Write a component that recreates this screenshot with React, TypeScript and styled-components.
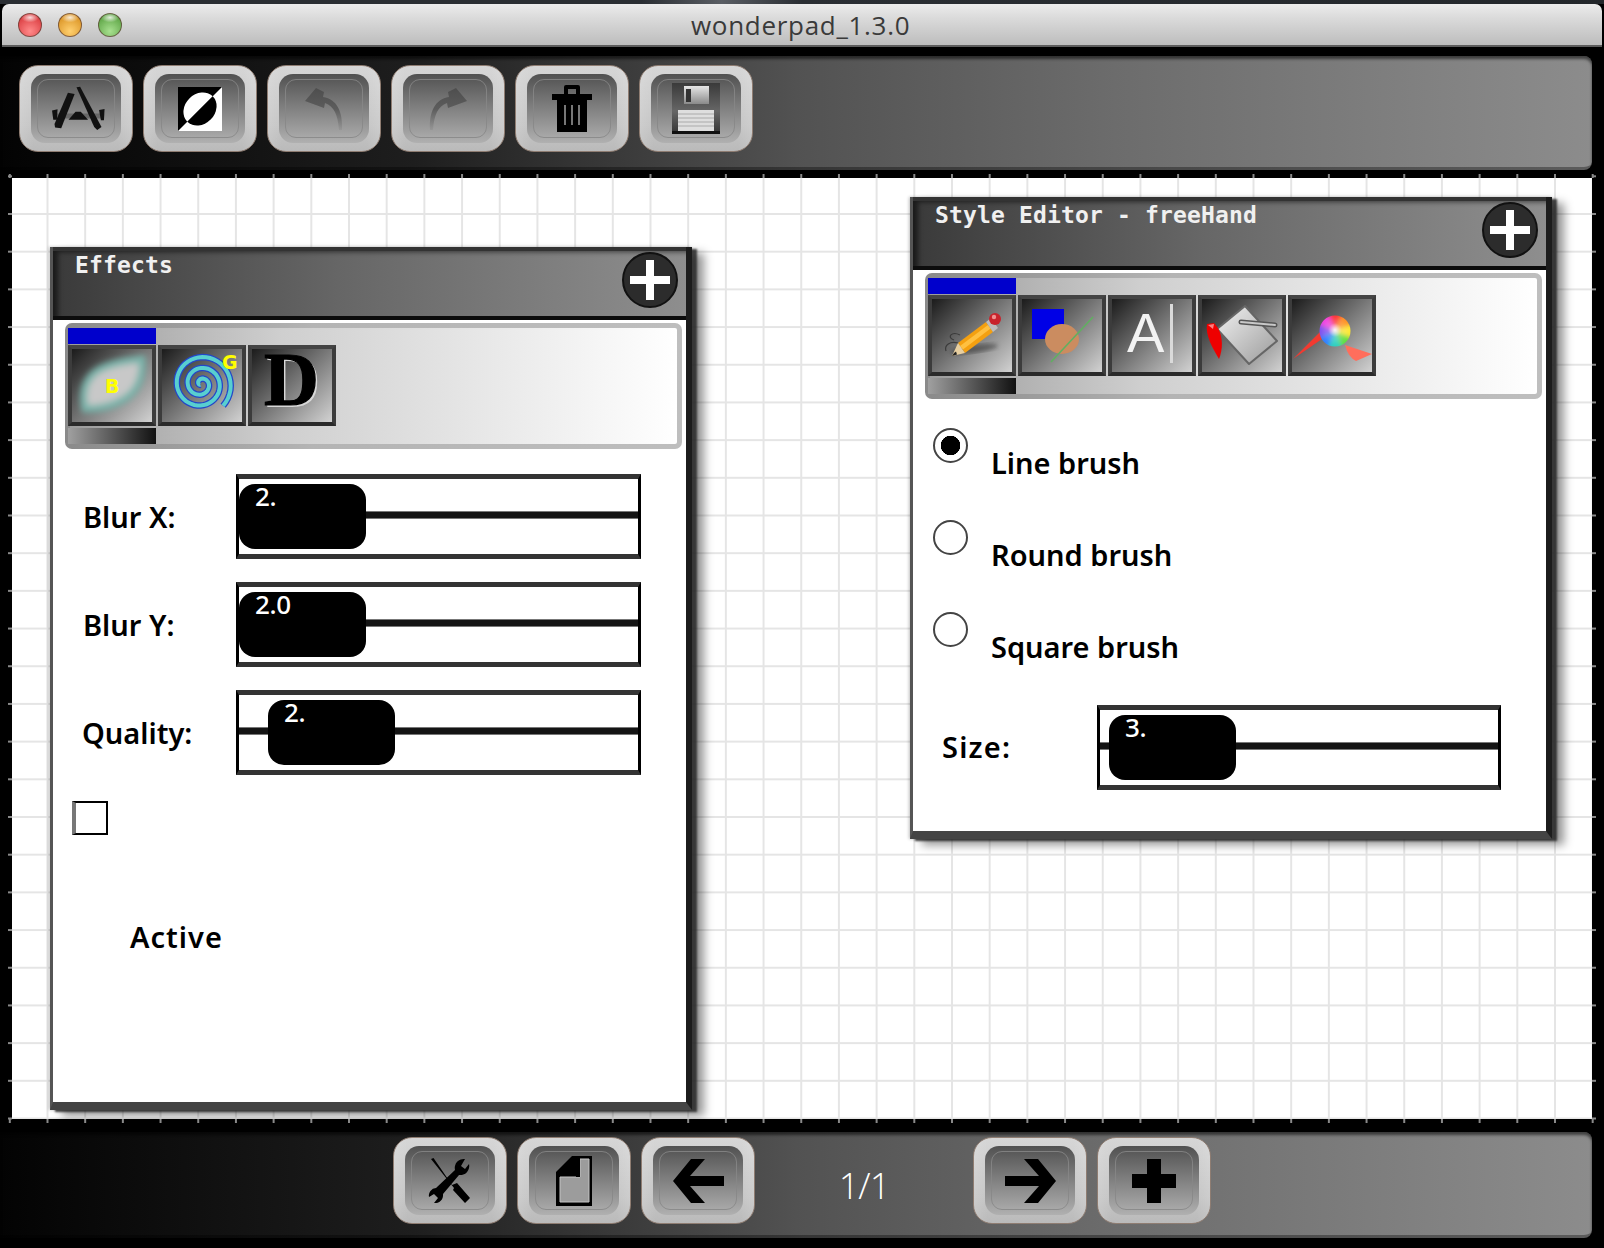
import React from "react";
import styled, { createGlobalStyle } from "styled-components";

const Global = createGlobalStyle`
  html, body { margin: 0; padding: 0; background: #000; }
  #root { width: 1604px; height: 1248px; overflow: hidden; }
`;

const Page = styled.div`
  width: 1604px;
  height: 1248px;
  background: #000;
  display: flex;
  flex-direction: column;
  overflow: hidden;
`;

const DesktopStrip = styled.div`
  height: 4px;
  flex: none;
  background: linear-gradient(to right, #2a2e33 0%, #2a2e33 40%, #5a5e64 45%, #2a2e33 50%, #23272b 100%);
`;

const TitleBar = styled.header`
  height: 43px;
  flex: none;
  margin: 0 2px;
  box-sizing: border-box;
  display: flex;
  align-items: center;
  position: relative;
  padding-left: 16px;
  gap: 16px;
  border-radius: 7px 7px 0 0;
  border-bottom: 2px solid #5c5c5c;
  background: linear-gradient(to bottom, #ececec 0%, #dadada 35%, #bdbdbd 100%);
`;

const Light = styled.span<{ $c: string; $d: string }>`
  width: 24px;
  height: 24px;
  border-radius: 50%;
  box-sizing: border-box;
  border: 1px solid rgba(90, 60, 50, 0.7);
  background:
    radial-gradient(ellipse 40% 22% at 50% 16%, rgba(255, 255, 255, 0.8), rgba(255, 255, 255, 0) 100%),
    radial-gradient(circle at 50% 78%, ${(p) => p.$c} 0%, ${(p) => p.$d} 85%);
`;

const WindowTitle = styled.div`
  position: absolute;
  left: 689px;
  top: 5px;
  font-family: "Open Sans", sans-serif;
  font-size: 26px;
  letter-spacing: 0.7px;
  line-height: 32px;
  color: #3a3a3a;
`;

const BarBase = styled.div`
  width: 1592px;
  flex: none;
  box-sizing: border-box;
  display: flex;
  border-radius: 0 8px 8px 0;
  border-bottom: 3px solid rgba(0, 0, 0, 0.35);
  box-shadow: inset 0 3px 3px rgba(0, 0, 0, 0.55);
  background: linear-gradient(to right, #030303 0%, #1e1e1e 26%, #525252 50%, #6c6c6c 70%, #8c8c8c 100%);
`;

const TopBar = styled(BarBase)`
  height: 114px;
  margin-top: 9px;
  padding: 9px 0 0 19px;
  gap: 10px;
`;

const BottomBar = styled(BarBase)`
  height: 106px;
  margin-top: 9px;
  padding: 5px 0 0 393px;
  gap: 10px;
`;

const PageLabel = styled.div`
  width: 198px;
  height: 87px;
  display: flex;
  align-items: center;
  justify-content: center;
  font-family: "Open Sans", sans-serif;
  font-weight: 300;
  font-size: 36px;
  letter-spacing: -1px;
  color: #fff;
  padding-top: 9px;
  box-sizing: border-box;
`;

const ToolButton = styled.button`
  width: 114px;
  height: 87px;
  box-sizing: border-box;
  padding: 8px 11px;
  border: 1px solid #8f7d72;
  border-radius: 19px;
  background:
    linear-gradient(to right, rgba(255, 255, 255, 0.12), rgba(255, 255, 255, 0) 12%, rgba(255, 255, 255, 0) 88%, rgba(255, 255, 255, 0.12)),
    linear-gradient(to bottom, #d6d6d6 0%, #c6c6c6 70%, #bababa 100%);
  flex: none;
  cursor: pointer;
`;

const ButtonWell = styled.div`
  width: 100%;
  height: 100%;
  box-sizing: border-box;
  padding: 5px 6px;
  border-radius: 14px;
  background: linear-gradient(to bottom, #515151 0%, #7c7c7c 45%, #b0b0b0 100%);
`;

const ButtonRim = styled.div`
  width: 100%;
  height: 100%;
  box-sizing: border-box;
  border: 1px solid rgba(135, 135, 135, 0.85);
  border-radius: 11px;
  display: flex;
  align-items: center;
  justify-content: center;
`;

const TickFrame = styled.div`
  width: 1588px;
  height: 949px;
  flex: none;
  margin: 4px 0 0 8px;
  box-sizing: border-box;
  padding: 4px;
  background-color: #000;
  background-image:
    linear-gradient(to right, #8a8a8a 2px, transparent 2px),
    linear-gradient(to right, #8a8a8a 2px, transparent 2px),
    linear-gradient(to bottom, #8a8a8a 2px, transparent 2px),
    linear-gradient(to bottom, #8a8a8a 2px, transparent 2px);
  background-size: 37.7px 4px, 37.7px 4px, 4px 37.7px, 4px 37.7px;
  background-repeat: repeat-x, repeat-x, repeat-y, repeat-y;
  background-position: 38.5px 0, 38.5px 100%, 0 39px, 100% 39px;
`;

const Stage = styled.main`
  position: relative;
  width: 100%;
  height: 100%;
  background-color: #fff;
  background-image:
    linear-gradient(to right, #e5e5e5 2px, transparent 2px),
    linear-gradient(to bottom, #e5e5e5 2px, transparent 2px);
  background-size: 37.7px 37.7px;
  background-position: 34.5px 35px;
  overflow: hidden;
`;

const Panel = styled.section<{ $x: number; $y: number; $h: number }>`
  position: absolute;
  left: ${(p) => p.$x}px;
  top: ${(p) => p.$y}px;
  width: 642px;
  height: ${(p) => p.$h}px;
  box-sizing: border-box;
  background: #fff;
  border-left: 3px solid #555;
  border-right: 6px solid #1c1c1c;
  border-bottom: 8px solid #444;
  box-shadow: 5px 2px 2px rgba(40, 40, 40, 0.85), 12px 6px 9px rgba(0, 0, 0, 0.42), -1px 0 3px rgba(0, 0, 0, 0.25);
  display: flex;
  flex-direction: column;
`;

const PanelHeader = styled.div`
  height: 73px;
  flex: none;
  box-sizing: border-box;
  display: flex;
  justify-content: space-between;
  align-items: flex-start;
  padding: 1px 8px 0 22px;
  border-top: 4px solid #333;
  border-bottom: 4px solid #0c0c0c;
  background: linear-gradient(to right, #3a3a3a 0%, #666 45%, #8e8e8e 100%);
  box-shadow: inset 7px 3px 5px -2px rgba(0, 0, 0, 0.55);
`;

const PanelTitle = styled.div`
  font-family: "DejaVu Sans Mono", monospace;
  font-size: 23px;
  letter-spacing: 0.15px;
  line-height: 27px;
  font-weight: 700;
  color: #f0f0f0;
  white-space: pre;
`;

const CloseButton = styled.button`
  width: 56px;
  height: 56px;
  padding: 0;
  border: 2px solid #111;
  border-radius: 50%;
  background: #2c2c2c;
  display: flex;
  align-items: center;
  justify-content: center;
  flex: none;
`;

const TabStrip = styled.div`
  width: 617px;
  height: 126px;
  flex: none;
  margin: 3px 0 0 12px;
  box-sizing: border-box;
  border: 5px solid transparent;
  border-radius: 7px;
  background:
    linear-gradient(to right, #9c9c9c 0%, #cfcfcf 35%, #ffffff 100%) padding-box,
    linear-gradient(to right, #8a8a8a 0%, #b4b4b4 40%, #bebebe 100%) border-box;
  display: flex;
  flex-direction: column;
`;

const TabRow = styled.div`
  display: flex;
  gap: 2px;
  margin-left: -2px;
  margin-top: 1px;
`;

const SelectedMark = styled.div`
  width: 88px;
  height: 16px;
  flex: none;
  margin-left: -2px;
  background: #0000cc;
`;

const LowerMark = styled.div`
  width: 88px;
  height: 16px;
  flex: none;
  margin: 2px 0 0 -2px;
  background: linear-gradient(to right, #a0a0a0, #111);
`;

const TabIcon = styled.div`
  width: 88px;
  height: 81px;
  flex: none;
  box-sizing: border-box;
  border: 4px solid #3c3c3c;
  border-top-color: #444;
  border-bottom-color: #2a2a2a;
  background: linear-gradient(135deg, #1b1b1b 0%, #808080 55%, #d2d2d2 100%);
  svg { display: block; }
`;

const SliderRow = styled.div<{ $pad: number; $col: number; $top: number }>`
  display: grid;
  grid-template-columns: ${(p) => p.$col}px 1fr;
  align-items: center;
  padding-left: ${(p) => p.$pad}px;
  margin-top: ${(p) => p.$top}px;
  height: 85px;
  flex: none;
`;

const FieldLabel = styled.label<{ $nudge?: number }>`
  font-family: "Noto Sans", sans-serif;
  font-weight: 600;
  font-size: 29px;
  line-height: 36px;
  color: #000;
  margin-left: ${(p) => p.$nudge ?? 0}px;
  margin-top: 1px;
`;

const SizeLabel = styled(FieldLabel)`
  letter-spacing: 1.2px;
  margin-top: -2px;
`;

const SliderBox = styled.div<{ $w: number }>`
  position: relative;
  width: ${(p) => p.$w}px;
  height: 85px;
  box-sizing: border-box;
  border: 3px solid #000;
  border-top: 5px solid #333;
  border-bottom: 5px solid #333;
  background: #fff;
`;

const SliderTrack = styled.div`
  position: absolute;
  left: 0;
  right: 0;
  top: 33px;
  height: 6px;
  background: #141414;
  box-shadow: 0 1px 0 #777, 0 -1px 0 #777;
`;

const SliderThumb = styled.div<{ $at: number }>`
  position: absolute;
  top: 5px;
  left: ${(p) => p.$at}px;
  width: 127px;
  height: 65px;
  box-sizing: border-box;
  padding-left: 16px;
  border-radius: 16px;
  background: #000;
  color: #fff;
  font-family: "Noto Sans", sans-serif;
  font-weight: 500;
  font-size: 26px;
  letter-spacing: -0.3px;
  line-height: 24px;
`;

const CheckBox = styled.div`
  width: 36px;
  height: 34px;
  box-sizing: border-box;
  margin: 26px 0 0 19px;
  border: 2px solid #000;
  border-left: 4px solid #777;
  flex: none;
`;

const CheckCaption = styled.div`
  font-family: "Noto Sans", sans-serif;
  font-weight: 600;
  font-size: 29px;
  letter-spacing: 1px;
  line-height: 36px;
  color: #000;
  margin: 84px 0 0 77px;
`;

const RadioList = styled.div`
  display: flex;
  flex-direction: column;
  margin-top: 29px;
  padding-left: 20px;
`;

const RadioRow = styled.div`
  height: 92px;
  display: flex;
  align-items: flex-start;
  gap: 23px;
`;

const RadioDot = styled.span<{ $on?: boolean }>`
  width: 35px;
  height: 35px;
  flex: none;
  box-sizing: border-box;
  border-radius: 50%;
  border: 2px solid #444;
  background: ${(p) => (p.$on ? "radial-gradient(circle, #000 0, #000 9.5px, #fff 10px)" : "#fff")};
`;

const RadioLabel = styled(FieldLabel)`
  margin-top: 17px;
`;

const Icon = styled.svg`
  display: block;
  flex: none;
`;

const AppIcon = () => (
  <Icon width="58" height="46" viewBox="110 78 190 150" style={{ marginLeft: 4 }}>
    <path d="M125 168 L288 168 L288 184 L125 184 Z" fill="#333" opacity="0.4" />
    <path d="M200 82 L212 80 L282 212 L268 222 L258 212 Z" fill="#111" />
    <path d="M172 100 L194 104 L150 216 L130 214 L128 202 Z" fill="#111" />
    <path d="M197 162 L214 162 L238 188 L174 188 Z" fill="#111" />
    <path d="M120 158 L138 154 L136 188 L124 188 Z" fill="#111" />
    <path d="M274 156 L292 153 L290 190 L280 190 Z" fill="#111" />
  </Icon>
);

const ContrastIcon = () => (
  <Icon width="44" height="44" viewBox="0 0 44 44">
    <rect width="44" height="44" fill="#fff" />
    <path d="M0 0 H44 L0 44 Z" fill="#000" />
    <g transform="rotate(-45 22 22)">
      <path d="M4 22 A18 15 0 0 1 40 22 Z" fill="#fff" />
      <path d="M4 22 A18 15 0 0 0 40 22 Z" fill="#000" />
    </g>
  </Icon>
);

const UndoIcon = ({ flip, id }: { flip?: boolean; id: string }) => (
  <Icon width="38" height="42" viewBox="0 0 38 42" style={flip ? { transform: "scaleX(-1)" } : undefined}>
    <defs>
      <linearGradient id={id} x1="0" y1="0" x2="0" y2="1">
        <stop offset="0" stopColor="#4e4e4e" />
        <stop offset="0.5" stopColor="#5c5c5c" />
        <stop offset="1" stopColor="#777" stopOpacity="0.2" />
      </linearGradient>
    </defs>
    <path d="M11 0 L0 13 L19 20 L20 15 C29 18 33 27 34 42 L37 42 C38 24 32 11 18 9 L19 4 Z" fill={`url(#${id})`} />
  </Icon>
);

const TrashIcon = () => (
  <Icon width="40" height="47" viewBox="0 0 40 47">
    <path d="M12 9 V2 Q12 0 14 0 H26 Q28 0 28 2 V9 H24 V4 H16 V9 Z" fill="#000" />
    <rect x="0" y="9" width="40" height="6" fill="#000" />
    <rect x="5" y="15" width="30" height="32" fill="#000" />
    <rect x="12" y="20" width="2" height="20" fill="#777" />
    <rect x="19" y="20" width="2" height="20" fill="#777" />
    <rect x="26" y="20" width="2" height="20" fill="#777" />
  </Icon>
);

const FloppyIcon = () => (
  <Icon width="50" height="52" viewBox="0 0 50 52">
    <defs>
      <linearGradient id="floppyBody" x1="0" y1="0" x2="0" y2="1">
        <stop offset="0" stopColor="#3a3a3a" />
        <stop offset="0.55" stopColor="#666" />
        <stop offset="1" stopColor="#333" />
      </linearGradient>
      <linearGradient id="floppyShutter" x1="0" y1="0" x2="0" y2="1">
        <stop offset="0" stopColor="#e6e6e6" />
        <stop offset="1" stopColor="#8a8a8a" />
      </linearGradient>
    </defs>
    <rect x="1" y="0" width="48" height="51" fill="url(#floppyBody)" />
    <rect x="13" y="3" width="25" height="18" fill="url(#floppyShutter)" />
    <rect x="15" y="6" width="5" height="13" fill="#333" />
    <rect x="7" y="27" width="36" height="21" fill="#dedede" />
    <path d="M7 31 H43 M7 35 H43 M7 39 H43 M7 43 H43" stroke="#aaa" strokeWidth="1" />
    <rect x="1" y="48" width="48" height="3" fill="#111" />
  </Icon>
);

const ToolsIcon = () => (
  <Icon width="44" height="46" viewBox="0 0 44 46">
    <path d="M3 1 L5.5 0 L24 27 L29 25 L42 40 L37 45 L25 32 L26 30 Z" fill="#000" />
    <path d="M37 1 A9 9 0 0 0 27 12 L8 30 A7.5 7.5 0 0 0 1 39 L6 36 L10 40 L6 45 A8 8 0 0 0 15 36 L31 17 A9 9 0 0 0 41 6 L37 11 L33 8 Z" fill="#000" />
  </Icon>
);

const DocIcon = () => (
  <Icon width="36" height="50" viewBox="0 0 36 50">
    <path d="M16 0 H36 V50 H0 V16 Z" fill="#000" />
    <path d="M24 3 H33 V46 H4 V21 H24 Z" fill="#9c9c9c" stroke="#c4c4c4" strokeWidth="1" />
    <rect x="20" y="3" width="4" height="18" fill="#000" />
  </Icon>
);

const ArrowIcon = ({ right }: { right?: boolean }) => (
  <Icon width="51" height="44" viewBox="0 0 51 44" style={right ? { transform: "scaleX(-1)" } : undefined}>
    <path d="M18 0 H32 L17 17 H51 V27 H17 L32 44 H18 L0 22 Z" fill="#000" />
  </Icon>
);

const PlusIcon = () => (
  <Icon width="44" height="44" viewBox="0 0 44 44">
    <path d="M15 0 H29 V15 H44 V29 H29 V44 H15 V29 H0 V15 H15 Z" fill="#000" />
  </Icon>
);

const WhitePlus = () => (
  <Icon width="40" height="40" viewBox="0 0 40 40">
    <path d="M16 0 H24 V16 H40 V24 H24 V40 H16 V24 H0 V16 H16 Z" fill="#fff" />
  </Icon>
);

const tabText = { fontFamily: "'DejaVu Sans', sans-serif", fontWeight: 700 };

const BlurTab = () => (
  <svg width="80" height="73" viewBox="0 0 80 73">
    <defs>
      <filter id="soft" x="-20%" y="-20%" width="140%" height="140%">
        <feGaussianBlur stdDeviation="3" />
      </filter>
    </defs>
    <path d="M13 60 C9 42 14 28 28 20 C42 13 58 11 70 10 C71 25 67 40 54 49 C42 57 26 60 13 60 Z" fill="#c8c8c8" stroke="#78b4aa" strokeWidth="7" filter="url(#soft)" />
    <text x="33" y="44" fontSize="19" fill="#ffff00" style={tabText}>B</text>
  </svg>
);

const spiralPath = (() => {
  const pts: string[] = [];
  const total = Math.PI * 2 * 2.75;
  for (let i = 0; i <= 120; i++) {
    const t = (i / 120) * total;
    const r = 1 + (t / total) * 30;
    const a = t + 2.35;
    pts.push(`${(39 + r * Math.cos(a)).toFixed(1)},${(35 + r * Math.sin(a)).toFixed(1)}`);
  }
  return "M" + pts.join(" L");
})();

const SpiralTab = () => (
  <svg width="80" height="73" viewBox="0 0 80 73">
    <path d={spiralPath} fill="none" stroke="#2347c8" strokeWidth="6.5" />
    <path d={spiralPath} fill="none" stroke="#58cfd0" strokeWidth="4" />
    <text x="60" y="20" fontSize="19" fill="#ffff00" style={tabText}>G</text>
  </svg>
);

const DropTab = () => (
  <svg width="80" height="73" viewBox="0 0 80 73" style={{ fontFamily: "'Liberation Serif', serif", fontWeight: 700, overflow: "visible" }}>
    <text x="14" y="58" fontSize="76" fill="#d8d8d8">D</text>
    <text x="12" y="56" fontSize="76" fill="#000" stroke="#000" strokeWidth="1.2">D</text>
  </svg>
);

const PencilTab = () => (
  <svg width="80" height="73" viewBox="0 0 80 73">
    <defs>
      <filter id="pshadow"><feGaussianBlur stdDeviation="2" /></filter>
    </defs>
    <ellipse cx="42" cy="50" rx="24" ry="4" fill="#333" opacity="0.55" filter="url(#pshadow)" transform="rotate(-8 42 50)" />
    <path d="M28 36 C20 32 14 38 22 41 M14 52 C12 46 18 42 26 44" fill="none" stroke="#2a2a2a" strokeWidth="1.2" opacity="0.7" />
    <path d="M26 44 L54 23 L61 33 L33 54 Z" fill="#f4a010" />
    <path d="M28 47 L56 26 L58.5 29.5 L31 50.5 Z" fill="#ffc040" />
    <path d="M26 44 L33 54 L20 57 Z" fill="#e8cfa0" />
    <path d="M22 54 L24 52.5 L25 55.5 L20 57 Z" fill="#222" />
    <path d="M54 23 L59 19 L66 29 L61 33 Z" fill="#bdbdbd" />
    <circle cx="63" cy="20" r="6" fill="#c8232c" />
    <circle cx="62" cy="18" r="2.2" fill="#f09090" />
  </svg>
);

const ShapesTab = () => (
  <svg width="80" height="73" viewBox="0 0 80 73">
    <rect x="10" y="10" width="32" height="30" fill="#0000e6" />
    <ellipse cx="40" cy="40" rx="17" ry="15" fill="#cb8c60" />
    <path d="M29 63 L71 18" stroke="#60b060" strokeWidth="1.6" />
  </svg>
);

const TextTab = () => (
  <svg width="80" height="73" viewBox="0 0 80 73" style={{ fontFamily: "'Liberation Sans', sans-serif" }}>
    <text x="15" y="53" fontSize="56" fill="#f2f2f2">A</text>
    <rect x="58" y="5" width="3" height="59" fill="#dadada" />
  </svg>
);

const BucketTab = () => (
  <svg width="80" height="73" viewBox="0 0 80 73">
    <defs>
      <linearGradient id="bucket" x1="0" y1="0" x2="1" y2="1">
        <stop offset="0" stopColor="#f2f2f2" />
        <stop offset="1" stopColor="#9a9a9a" />
      </linearGradient>
    </defs>
    <path d="M43 7 L75 42 L47 65 L15 30 Z" fill="url(#bucket)" stroke="#666" strokeWidth="2" strokeLinejoin="round" />
    <path d="M39 23 L73 26" stroke="#555" strokeWidth="5" strokeLinecap="round" />
    <path d="M39 23 L73 26" stroke="#c8c8c8" strokeWidth="2" strokeLinecap="round" />
    <path d="M5 25 C3 36 11 50 17 60 C21 50 21 38 16 29 L12 24 Z" fill="#ee0000" />
    <path d="M6 26 L12 25 L11 30 Z" fill="#ff8080" />
  </svg>
);

const wheel = ["#ff3030", "#ff9020", "#ffe830", "#60e040", "#30d0c0", "#3080ff", "#8050f0", "#f040e0"];

const ColorTab = () => (
  <svg width="80" height="73" viewBox="0 0 80 73">
    <defs>
      <radialGradient id="ballLight">
        <stop offset="0" stopColor="#fff" stopOpacity="0.9" />
        <stop offset="0.45" stopColor="#fff" stopOpacity="0.2" />
        <stop offset="1" stopColor="#fff" stopOpacity="0" />
      </radialGradient>
      <clipPath id="ballClip"><circle cx="43" cy="32" r="15.5" /></clipPath>
      <filter id="ballBlur"><feGaussianBlur stdDeviation="2" /></filter>
    </defs>
    <path d="M1 60 L24 37 L28 33 L30 40 Z" fill="#f23a30" />
    <path d="M53 46 L80 55 L64 62 Q56 58 53 46 Z" fill="#ff6e5c" />
    <g clipPath="url(#ballClip)">
      <g filter="url(#ballBlur)">
        {wheel.map((c, i) => {
          const a0 = ((i * 45 - 112) * Math.PI) / 180;
          const a1 = ((i * 45 - 67) * Math.PI) / 180;
          const d = `M43 32 L${43 + 22 * Math.cos(a0)} ${32 + 22 * Math.sin(a0)} A22 22 0 0 1 ${43 + 22 * Math.cos(a1)} ${32 + 22 * Math.sin(a1)} Z`;
          return <path key={c} d={d} fill={c} />;
        })}
      </g>
      <circle cx="43" cy="31" r="15.5" fill="url(#ballLight)" />
    </g>
  </svg>
);

const Slider = ({ value, at, width }: { value: string; at: number; width: number }) => (
  <SliderBox $w={width}>
    <SliderTrack />
    <SliderThumb $at={at}>{value}</SliderThumb>
  </SliderBox>
);

const Tabs = ({ children }: { children: React.ReactNode }) => (
  <TabStrip>
    <SelectedMark />
    <TabRow>{children}</TabRow>
    <LowerMark />
  </TabStrip>
);

const Btn = ({ children, label }: { children: React.ReactNode; label: string }) => (
  <ToolButton aria-label={label}>
    <ButtonWell>
      <ButtonRim>{children}</ButtonRim>
    </ButtonWell>
  </ToolButton>
);

export default function App() {
  return (
    <Page>
      <Global />
      <DesktopStrip />
      <TitleBar>
        <Light $c="#ff8a8a" $d="#d8383c" />
        <Light $c="#ffd070" $d="#d89020" />
        <Light $c="#a8e090" $d="#58a040" />
        <WindowTitle>wonderpad_1.3.0</WindowTitle>
      </TitleBar>
      <TopBar>
        <Btn label="apps"><AppIcon /></Btn>
        <Btn label="contrast"><ContrastIcon /></Btn>
        <Btn label="undo"><UndoIcon id="undoFill" /></Btn>
        <Btn label="redo"><UndoIcon id="redoFill" flip /></Btn>
        <Btn label="delete"><TrashIcon /></Btn>
        <Btn label="save"><FloppyIcon /></Btn>
      </TopBar>
      <TickFrame>
        <Stage>
          <Panel $x={38} $y={69} $h={863}>
            <PanelHeader>
              <PanelTitle>Effects</PanelTitle>
              <CloseButton aria-label="add"><WhitePlus /></CloseButton>
            </PanelHeader>
            <Tabs>
              <TabIcon><BlurTab /></TabIcon>
              <TabIcon><SpiralTab /></TabIcon>
              <TabIcon><DropTab /></TabIcon>
            </Tabs>
            <SliderRow $pad={30} $col={153} $top={25}>
              <FieldLabel>Blur X:</FieldLabel>
              <Slider value="2." at={0} width={405} />
            </SliderRow>
            <SliderRow $pad={30} $col={153} $top={23}>
              <FieldLabel>Blur Y:</FieldLabel>
              <Slider value="2.0" at={0} width={405} />
            </SliderRow>
            <SliderRow $pad={30} $col={153} $top={23}>
              <FieldLabel $nudge={-1}>Quality:</FieldLabel>
              <Slider value="2." at={29} width={405} />
            </SliderRow>
            <CheckBox />
            <CheckCaption>Active</CheckCaption>
          </Panel>
          <Panel $x={898} $y={19} $h={642}>
            <PanelHeader>
              <PanelTitle>Style Editor - freeHand</PanelTitle>
              <CloseButton aria-label="add"><WhitePlus /></CloseButton>
            </PanelHeader>
            <Tabs>
              <TabIcon><PencilTab /></TabIcon>
              <TabIcon><ShapesTab /></TabIcon>
              <TabIcon><TextTab /></TabIcon>
              <TabIcon><BucketTab /></TabIcon>
              <TabIcon><ColorTab /></TabIcon>
            </Tabs>
            <RadioList>
              <RadioRow><RadioDot $on /><RadioLabel>Line brush</RadioLabel></RadioRow>
              <RadioRow><RadioDot /><RadioLabel>Round brush</RadioLabel></RadioRow>
              <RadioRow><RadioDot /><RadioLabel>Square brush</RadioLabel></RadioRow>
            </RadioList>
            <SliderRow $pad={29} $col={155} $top={1}>
              <SizeLabel>Size:</SizeLabel>
              <Slider value="3." at={9} width={404} />
            </SliderRow>
          </Panel>
        </Stage>
      </TickFrame>
      <BottomBar>
        <Btn label="tools"><ToolsIcon /></Btn>
        <Btn label="page"><DocIcon /></Btn>
        <Btn label="previous"><ArrowIcon /></Btn>
        <PageLabel>1/1</PageLabel>
        <Btn label="next"><ArrowIcon right /></Btn>
        <Btn label="add page"><PlusIcon /></Btn>
      </BottomBar>
    </Page>
  );
}
